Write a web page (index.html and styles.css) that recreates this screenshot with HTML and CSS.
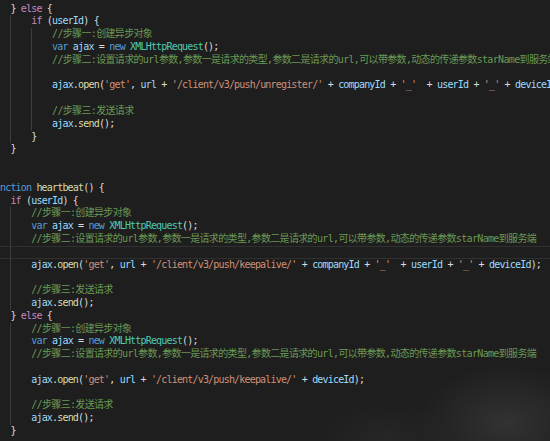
FILE: index.html
```html
<!DOCTYPE html>
<html lang="zh-CN">

<head>
    <meta charset="UTF-8">
    <meta name="viewport" content="width=device-width, initial-scale=1.0">
    <title>push.js</title>
    <link rel="stylesheet" href="styles.css">
</head>

<body>
    <div class="editor">
        <div class="code">
<div class="ln"><span class="ind">    </span>} <span class="k">else</span> {</div>
<div class="ln"><span class="ind">    </span><span class="ind">    </span><span class="k">if</span> (<span class="v">userId</span>) {</div>
<div class="ln"><span class="ind">    </span><span class="ind">    </span><span class="ind">    </span><span class="c">//步骤一:创建异步对象</span></div>
<div class="ln"><span class="ind">    </span><span class="ind">    </span><span class="ind">    </span><span class="s">var</span> <span class="v">ajax</span> = <span class="s">new</span> <span class="t">XMLHttpRequest</span>();</div>
<div class="ln"><span class="ind">    </span><span class="ind">    </span><span class="ind">    </span><span class="c">//步骤二:设置请求的url参数,参数一是请求的类型,参数二是请求的url,可以带参数,动态的传递参数starName到服务端</span></div>
<div class="ln"><span class="ind">    </span><span class="ind">    </span><span class="ind">    </span></div>
<div class="ln"><span class="ind">    </span><span class="ind">    </span><span class="ind">    </span><span class="v">ajax</span>.<span class="f">open</span>(<span class="str">'get'</span>, <span class="v">url</span> + <span class="str">'/client/v3/push/unregister/'</span> + <span class="v">companyId</span> + <span class="str">'_'</span>  + <span class="v">userId</span> + <span class="str">'_'</span> + <span class="v">deviceId</span>);</div>
<div class="ln"><span class="ind">    </span><span class="ind">    </span><span class="ind">    </span></div>
<div class="ln"><span class="ind">    </span><span class="ind">    </span><span class="ind">    </span><span class="c">//步骤三:发送请求</span></div>
<div class="ln"><span class="ind">    </span><span class="ind">    </span><span class="ind">    </span><span class="v">ajax</span>.<span class="f">send</span>();</div>
<div class="ln"><span class="ind">    </span><span class="ind">    </span>}</div>
<div class="ln"><span class="ind">    </span>}</div>
<div class="ln"></div>
<div class="ln"></div>
<div class="ln"><span class="s">function</span> <span class="f">heartbeat</span>() {</div>
<div class="ln"><span class="ind">    </span><span class="k">if</span> (<span class="v">userId</span>) {</div>
<div class="ln"><span class="ind">    </span><span class="ind">    </span><span class="c">//步骤一:创建异步对象</span></div>
<div class="ln"><span class="ind">    </span><span class="ind">    </span><span class="s">var</span> <span class="v">ajax</span> = <span class="s">new</span> <span class="t">XMLHttpRequest</span>();</div>
<div class="ln"><span class="ind">    </span><span class="ind">    </span><span class="c">//步骤二:设置请求的url参数,参数一是请求的类型,参数二是请求的url,可以带参数,动态的传递参数starName到服务端</span></div>
<div class="ln cur"><span class="ind">    </span><span class="ind">    </span></div>
<div class="ln"><span class="ind">    </span><span class="ind">    </span><span class="v">ajax</span>.<span class="f">open</span>(<span class="str">'get'</span>, <span class="v">url</span> + <span class="str">'/client/v3/push/keepalive/'</span> + <span class="v">companyId</span> + <span class="str">'_'</span>  + <span class="v">userId</span> + <span class="str">'_'</span> + <span class="v">deviceId</span>);</div>
<div class="ln"><span class="ind">    </span><span class="ind">    </span></div>
<div class="ln"><span class="ind">    </span><span class="ind">    </span><span class="c">//步骤三:发送请求</span></div>
<div class="ln"><span class="ind">    </span><span class="ind">    </span><span class="v">ajax</span>.<span class="f">send</span>();</div>
<div class="ln"><span class="ind">    </span>} <span class="k">else</span> {</div>
<div class="ln"><span class="ind">    </span><span class="ind">    </span><span class="c">//步骤一:创建异步对象</span></div>
<div class="ln"><span class="ind">    </span><span class="ind">    </span><span class="s">var</span> <span class="v">ajax</span> = <span class="s">new</span> <span class="t">XMLHttpRequest</span>();</div>
<div class="ln"><span class="ind">    </span><span class="ind">    </span><span class="c">//步骤二:设置请求的url参数,参数一是请求的类型,参数二是请求的url,可以带参数,动态的传递参数starName到服务端</span></div>
<div class="ln"><span class="ind">    </span><span class="ind">    </span></div>
<div class="ln"><span class="ind">    </span><span class="ind">    </span><span class="v">ajax</span>.<span class="f">open</span>(<span class="str">'get'</span>, <span class="v">url</span> + <span class="str">'/client/v3/push/keepalive/'</span> + <span class="v">deviceId</span>);</div>
<div class="ln"><span class="ind">    </span><span class="ind">    </span></div>
<div class="ln"><span class="ind">    </span><span class="ind">    </span><span class="c">//步骤三:发送请求</span></div>
<div class="ln"><span class="ind">    </span><span class="ind">    </span><span class="v">ajax</span>.<span class="f">send</span>();</div>
<div class="ln"><span class="ind">    </span>}</div>
        </div>
    </div>
</body>

</html>
```

FILE: styles.css
```css
* {
    margin: 0;
    padding: 0;
    box-sizing: border-box;
}

html,
body {
    height: 100%;
}

body {
    background:
        radial-gradient(ellipse 90px 60px at 92% 96%, rgba(255, 255, 255, 0.09), rgba(255, 255, 255, 0) 100%),
        radial-gradient(ellipse 70px 40px at 70% 100%, rgba(255, 255, 255, 0.04), rgba(255, 255, 255, 0) 100%),
        #1e1e1e;
    overflow: hidden;
}

.editor {
    height: 100%;
    overflow: hidden;
}

/* column 0 sits just off the left edge, as in the cropped shot */
.code {
    margin-left: -10.4px;
    padding-top: 2.6px;
    font-family: "DejaVu Sans Mono", "Noto Sans CJK SC", monospace;
    font-size: 10px;
    letter-spacing: -0.82px;
    color: #dadada;
}

.ln {
    height: 12.8px;
    line-height: 12.8px;
    white-space: pre;
}

.ln.cur {
    box-shadow: inset 0 1px #303030, inset 0 -1px #303030;
}

.ind {
    display: inline-block;
    height: 12.8px;
    vertical-align: top;
    box-shadow: inset 1px 0 #3c3c3c;
}

.k {
    color: #c586c0;
}

.s {
    color: #569cd6;
}

.t {
    color: #4ec9b0;
}

.v {
    color: #9cdcfe;
}

.f {
    color: #dcdcaa;
}

.str {
    color: #ce9178;
}

/* the cjk glyphs in the shot run a touch wider */
.c {
    color: #6a9955;
    letter-spacing: -0.66px;
}
```
